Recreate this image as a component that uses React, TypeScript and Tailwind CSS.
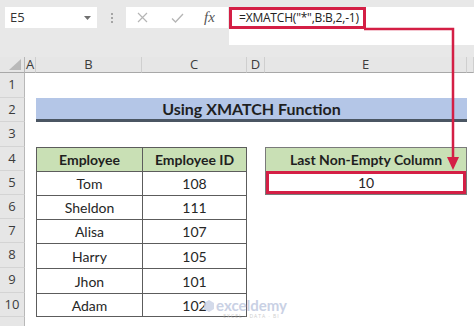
import React from "react";

const RED = "#d41f45";

const data: [string, string][] = [
  ["Tom", "108"],
  ["Sheldon", "111"],
  ["Alisa", "107"],
  ["Harry", "105"],
  ["Jhon", "101"],
  ["Adam", "102"],
];

const hdrFont = { fontFamily: '"Open Sans", "Noto Sans", sans-serif' };
const cellFont = { fontFamily: 'Lato, "Open Sans", sans-serif' };

function RowHead({ n }: { n: number | string }) {
  return (
    <div
      className="bg-[#e6e6e6] border-b border-b-[#d4d4d4] border-r border-r-[#b8b8b8] flex items-center justify-center text-[13px] text-[#3c3c3c]"
      style={hdrFont}
    >
      {n}
    </div>
  );
}

function Blank() {
  return <div className="bg-white" />;
}

export default function App() {
  const rows: React.ReactNode[] = [];

  rows.push(
    <div key="corner" className="bg-[#e6e6e6] border-r border-r-[#b8b8b8] border-b border-b-[#a8a8a8] flex items-end justify-end pr-[3px] pb-[2px]">
      <svg width="12" height="11" viewBox="0 0 12 11">
        <polygon points="12,0 12,11 0,11" fill="#b9b9b9" />
      </svg>
    </div>
  );
  ["A", "B", "C", "D", "E", ""].forEach((l, i) => (
    rows.push(
      <div
        key={"h" + i}
        className="bg-[#e6e6e6] border-r border-r-[#cfcfcf] border-b border-b-[#a8a8a8] flex items-center justify-center text-[13px] text-[#3c3c3c]"
        style={hdrFont}
      >
        {l}
      </div>
    )
  ));

  for (let r = 1; r <= 11; r++) {
    rows.push(<RowHead key={"rh" + r} n={r === 11 ? "" : r} />);
    if (r === 2) {
      rows.push(<Blank key="2a" />);
      rows.push(
        <div
          key="title"
          className="col-span-4 bg-[#b4c6e7] border-b-[3px] border-b-[#4b5663] flex items-center justify-center text-[16px] font-bold text-[#1f1f1f]"
          style={cellFont}
        >
          Using XMATCH Function
        </div>
      );
      rows.push(<Blank key="2f" />);
      continue;
    }
    rows.push(<Blank key={r + "a"} />);
    if (r === 4) {
      rows.push(
        <div key="4b" className="bg-[#c9e0b5] border-l border-t border-[#5c5c5c] flex items-center justify-center text-[14px] font-bold text-[#1f1f1f]" style={cellFont}>
          Employee
        </div>
      );
      rows.push(
        <div key="4c" className="bg-[#c9e0b5] border-l border-t border-r border-[#5c5c5c] flex items-center justify-center text-[14px] font-bold text-[#1f1f1f]" style={cellFont}>
          Employee ID
        </div>
      );
      rows.push(<Blank key="4d" />);
      rows.push(
        <div key="4e" className="bg-[#c9e0b5] border-l border-t border-r border-[#7a7a7a] flex items-center justify-center text-[14px] font-bold text-[#1f1f1f]" style={cellFont}>
          Last Non-Empty Column
        </div>
      );
      rows.push(<Blank key="4f" />);
      continue;
    }
    if (r >= 5 && r <= 10) {
      const [name, id] = data[r - 5];
      const last = r === 10;
      rows.push(
        <div
          key={r + "b"}
          className={
            "bg-white border-l border-t border-[#5c5c5c] flex items-center justify-center text-[14px] text-[#262626] " +
            (last ? "border-b" : "")
          }
          style={cellFont}
        >
          {name}
        </div>
      );
      rows.push(
        <div
          key={r + "c"}
          className={
            "bg-white border-l border-t border-r border-[#5c5c5c] flex items-center justify-center text-[14px] text-[#262626] " +
            (last ? "border-b" : "")
          }
          style={cellFont}
        >
          {id}
        </div>
      );
      rows.push(<Blank key={r + "d"} />);
      if (r === 5) {
        rows.push(
          <div key="5e" className="bg-white border-b border-l border-r border-[#7a7a7a] flex">
            <div
              className="flex-1 border-[3px] border-[#d41f45] flex items-center justify-center text-[14px] text-[#262626]"
              style={cellFont}
            >
              10
            </div>
          </div>
        );
      } else {
        rows.push(<Blank key={r + "e"} />);
      }
      rows.push(<Blank key={r + "f"} />);
      continue;
    }
    for (let k = 0; k < 5; k++) rows.push(<Blank key={r + "x" + k} />);
  }

  return (
    <div className="relative w-[474px] h-[326px] overflow-hidden bg-[#e8e8e8] flex flex-col">
      {/* Formula bar */}
      <div className="h-[57px] flex items-start pt-[7px] shrink-0">
        <div className="ml-[5px] w-[92px] h-[21px] bg-white flex items-center justify-between pl-[5px] pr-[6px]">
          <span className="text-[13px] text-[#333]" style={hdrFont}>E5</span>
          <svg width="7" height="4" viewBox="0 0 7 4">
            <polygon points="0,0 7,0 3.5,4" fill="#707070" />
          </svg>
        </div>
        <div className="w-[29px] h-[21px] flex flex-col items-center justify-center gap-[2px]">
          <span className="w-[2px] h-[2px] bg-[#a5a5a5]" />
          <span className="w-[2px] h-[2px] bg-[#a5a5a5]" />
          <span className="w-[2px] h-[2px] bg-[#a5a5a5]" />
        </div>
        <div className="w-[102px] h-[21px] bg-white flex items-center">
          <svg className="ml-[11px]" width="11" height="11" viewBox="0 0 11 11">
            <path d="M1 1 L10 10 M10 1 L1 10" stroke="#b5b5b5" strokeWidth="1.2" />
          </svg>
          <svg className="ml-[23px]" width="13" height="10" viewBox="0 0 13 10">
            <path d="M1 5.5 L4.5 9 L12 1" stroke="#b5b5b5" strokeWidth="1.3" fill="none" />
          </svg>
          <span
            className="ml-[20px] text-[15px] italic text-[#555] leading-none"
            style={{ fontFamily: '"Liberation Serif", serif' }}
          >
            fx
          </span>
        </div>
        <div className="ml-[1px] flex-1 h-[38px] bg-white">
          <div className="w-[137px] h-[22px] border-[3px] border-[#d41f45] flex items-center pl-[7px]">
            <span className="text-[12px] tracking-[-0.2px] text-[#222] whitespace-nowrap" style={hdrFont}>
              =XMATCH("*",B:B,2,-1)
            </span>
          </div>
        </div>
      </div>

      {/* Sheet */}
      <div className="grid grid-cols-[25px_11px_106px_105px_18px_202px_1fr] grid-rows-[16px_25px_24px_25px_24px_24px_24px_24px_25px_25px_24px_30px] flex-1">
        {rows}
      </div>

      {/* Arrow overlay */}
      <svg className="absolute left-0 top-0 pointer-events-none" width="474" height="326" viewBox="0 0 474 326">
        <polyline points="364,29 453,29 453,160" fill="none" stroke={RED} strokeWidth="2.5" />
        <polygon points="447,157 459,157 453,170" fill={RED} />
      </svg>

      {/* Watermark */}
      <div className="absolute left-[203px] top-[298px] flex items-start gap-[1px] opacity-80 pointer-events-none">
        <svg width="12" height="14" viewBox="0 0 12 14" className="mt-[1px]">
          <path d="M6 1 L11 4 L11 10 L6 13 L1 10 L1 4 Z" fill="#c9d1e6" />
        </svg>
        <div className="flex flex-col items-center leading-none">
          <span className="text-[15px] font-bold text-[#bcc6de]" style={cellFont}>exceldemy</span>
          <span className="text-[5px] tracking-[1px] text-[#c3c3c3] mt-[1px]" style={hdrFont}>EXCEL · DATA · BI</span>
        </div>
      </div>
    </div>
  );
}
